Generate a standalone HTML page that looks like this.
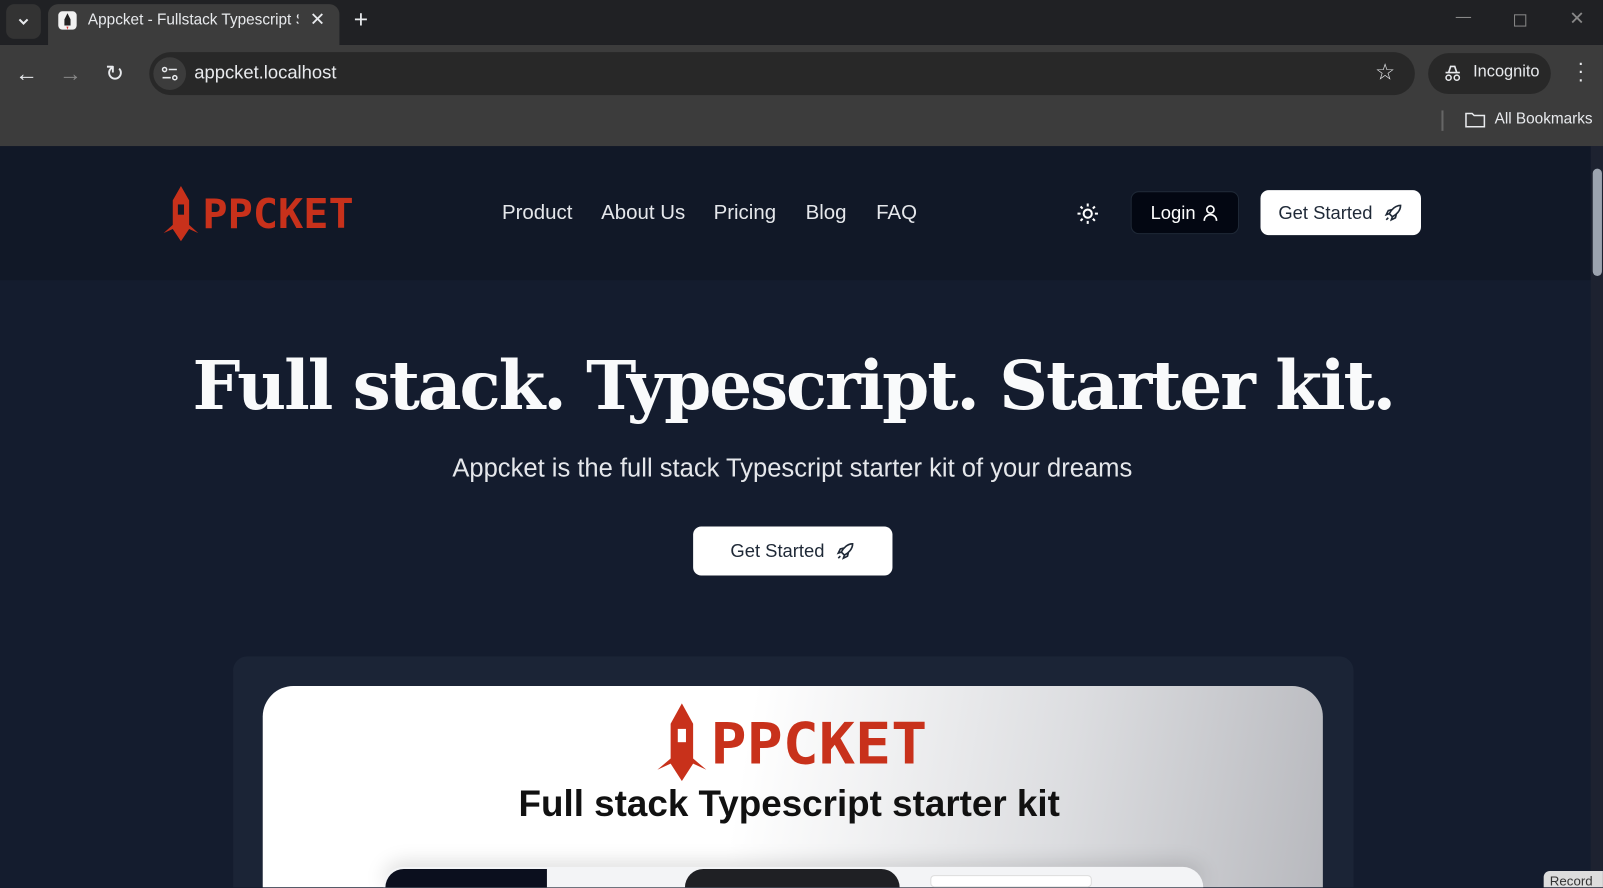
<!DOCTYPE html>
<html><head><meta charset="utf-8"><style>
*{margin:0;padding:0;box-sizing:border-box}
html,body{width:1603px;height:888px;overflow:hidden}
body{background:#141c2e;font-family:"Liberation Sans",sans-serif;position:relative}
#w{position:absolute;left:0;top:0;width:1568px;height:868px;transform:scale(1.0223);transform-origin:0 0;overflow:hidden}
.abs{position:absolute}
.tabbar{left:0;top:0;width:1568px;height:44px;background:#202124}
.toolbar{left:0;top:44px;width:1568px;height:99px;background:#3c3c3c}
.tab{left:47px;top:4px;width:285px;height:40px;background:#3c3c3c;border-radius:10px 10px 0 0}
.url{left:146px;top:51px;width:1238px;height:42px;background:#282828;border-radius:21px}
.t{color:#e8eaed;font-size:15px;white-space:nowrap}
.header{left:0;top:143px;width:1556px;height:131px;background:#111827}
.nav a{color:#e5e7eb;font-size:20px;text-decoration:none;position:absolute;top:197px}
.btn{border-radius:8px;display:flex;align-items:center;justify-content:center;font-size:18px}
.scroll{left:1556px;top:143px;width:12px;height:745px;background:#1d2230}
</style></head><body><div id="w">
<div class="abs tabbar"></div>
<div class="abs" style="left:6px;top:4px;width:34px;height:34px;background:#333;border-radius:8px"></div>
<svg class="abs" style="left:16px;top:14px" width="14" height="14"><path d="M3 5l4 4 4-4" stroke="#e8eaed" stroke-width="2" fill="none"/></svg>
<div class="abs tab"></div>
<div class="abs" style="left:57px;top:11px;width:18px;height:18px;background:#f1f1f1;border-radius:4px"></div>
<svg class="abs" style="left:57px;top:11px" width="18" height="18"><path d="M9 2L6 8v6h6V8z" fill="#222"/><path d="M8 15l1 3 1-3z" fill="#d33"/></svg>
<div class="abs t" style="left:86px;top:11px;width:206px;overflow:hidden">Appcket - Fullstack Typescript S</div>
<div class="abs t" style="left:303px;top:9px;font-size:18px">✕</div>
<div class="abs t" style="left:346px;top:6px;font-size:24px">+</div>
<div class="abs t" style="left:1424px;top:8px;color:#888">—</div>
<div class="abs" style="left:1481px;top:14px;width:12px;height:12px;border:1px solid #888"></div>
<div class="abs t" style="left:1535px;top:8px;color:#888;font-size:18px">✕</div>
<div class="abs toolbar"></div>
<div class="abs t" style="left:15px;top:59px;font-size:22px">←</div>
<div class="abs t" style="left:58px;top:59px;font-size:22px;color:#888">→</div>
<div class="abs t" style="left:103px;top:59px;font-size:22px">↻</div>
<div class="abs url"></div>
<div class="abs" style="left:150px;top:56px;width:32px;height:32px;background:#3c3c3c;border-radius:16px"></div>
<svg class="abs" style="left:157px;top:63px" width="18" height="18"><circle cx="4" cy="5" r="2" stroke="#e8eaed" fill="none" stroke-width="1.5"/><path d="M8 5h8M2 13h8" stroke="#e8eaed" stroke-width="1.5"/><circle cx="14" cy="13" r="2" stroke="#e8eaed" fill="none" stroke-width="1.5"/></svg>
<div class="abs t" style="left:190px;top:61px;font-size:18px">appcket.localhost</div>
<div class="abs t" style="left:1345px;top:58px;font-size:22px">☆</div>
<div class="abs" style="left:1397px;top:52px;width:120px;height:40px;background:#282828;border-radius:20px"></div>
<svg class="abs" style="left:1411px;top:62px" width="20" height="20"><path d="M3 9h14M6 9l2-6h4l2 6" stroke="#e8eaed" stroke-width="1.6" fill="none"/><circle cx="6" cy="14" r="2.5" stroke="#e8eaed" fill="none" stroke-width="1.5"/><circle cx="14" cy="14" r="2.5" stroke="#e8eaed" fill="none" stroke-width="1.5"/></svg>
<div class="abs t" style="left:1441px;top:62px;font-size:16px">Incognito</div>
<div class="abs t" style="left:1543px;top:58px;font-size:20px;line-height:8px;width:4px">·<br>·<br>·</div>
<div class="abs" style="left:1410px;top:108px;width:2px;height:20px;background:#666"></div>
<svg class="abs" style="left:1432px;top:108px" width="22" height="18"><path d="M2 3h6l2 2h10v11H2z" stroke="#e8eaed" stroke-width="1.5" fill="none"/></svg>
<div class="abs t" style="left:1462px;top:108px;font-size:15px">All Bookmarks</div>

<div class="abs header"></div>
<svg class="abs" style="left:160px;top:182px" width="190" height="54"><path d="M17 0L9 14v24L0 46l9-4 8 12 8-12 9 4-9-8V14z" fill="#c8311b"/><rect x="14" y="18" width="6" height="10" fill="#111827"/><text x="38" y="41" font-family="DejaVu Sans Mono,Liberation Mono,monospace" font-weight="bold" font-size="40" fill="#c8311b" textLength="148" lengthAdjust="spacingAndGlyphs">PPCKET</text></svg>
<div class="nav"><a style="left:491px">Product</a><a style="left:588px">About Us</a><a style="left:698px">Pricing</a><a style="left:788px">Blog</a><a style="left:857px">FAQ</a></div>
<svg class="abs" style="left:1052px;top:197px" width="24" height="24"><circle cx="12" cy="12" r="4" stroke="#fff" stroke-width="2" fill="none"/><path d="M12 2v3M12 19v3M2 12h3M19 12h3M5 5l2 2M17 17l2 2M5 19l2-2M17 7l2-2" stroke="#fff" stroke-width="2"/></svg>
<div class="abs btn" style="left:1106px;top:187px;width:106px;height:42px;background:#030712;border:1px solid #1f2937;color:#fff">Login&nbsp;<svg width="18" height="18"><circle cx="9" cy="6" r="3.5" stroke="#fff" stroke-width="1.6" fill="none"/><path d="M3 17c0-4 3-6 6-6s6 2 6 6" stroke="#fff" stroke-width="1.6" fill="none"/></svg></div>
<div class="abs btn" style="left:1233px;top:186px;width:157px;height:44px;background:#fff;color:#1f2937">Get Started&nbsp;&nbsp;<svg width="20" height="20"><path d="M17 3c-5 0-9 4-11 8l3 3c4-2 8-6 8-11zM6 11l-3 1 2-4 4-1M9 14l-1 3 4-2 1-4M5 15l-2 2" stroke="#1f2937" stroke-width="1.6" fill="none"/></svg></div>

<div class="abs" style="left:0;top:338px;width:1552px;text-align:center;color:#f9fafb;font-family:'DejaVu Serif',serif;font-weight:bold;font-size:66px;letter-spacing:-2px;white-space:nowrap">Full stack. Typescript. Starter kit.</div>
<div class="abs" style="left:0;top:444px;width:1550px;text-align:center;color:#e5e7eb;font-size:25px">Appcket is the full stack Typescript starter kit of your dreams</div>
<div class="abs btn" style="left:678px;top:515px;width:195px;height:48px;background:#fff;color:#1f2937">Get Started&nbsp;&nbsp;<svg width="20" height="20"><path d="M17 3c-5 0-9 4-11 8l3 3c4-2 8-6 8-11zM6 11l-3 1 2-4 4-1M9 14l-1 3 4-2 1-4M5 15l-2 2" stroke="#1f2937" stroke-width="1.6" fill="none"/></svg></div>

<div class="abs" style="left:228px;top:642px;width:1096px;height:226px;background:#1b2436;border-radius:14px 14px 0 0"></div>
<div class="abs" style="left:257px;top:671px;width:1037px;height:197px;border-radius:30px 30px 0 0;background:linear-gradient(100deg,#fff 0%,#fff 45%,#dcdde0 75%,#b8b9be 100%)"></div>
<svg class="abs" style="left:643px;top:688px" width="270" height="76"><path d="M24 0L13 20v34L0 65l13-6 11 17 11-17 13 6-13-11V20z" fill="#c8311b"/><rect x="20" y="25" width="8" height="13" fill="#fff"/><text x="52" y="59" font-family="DejaVu Sans Mono,Liberation Mono,monospace" font-weight="bold" font-size="56" fill="#c8311b" textLength="212" lengthAdjust="spacingAndGlyphs">PPCKET</text></svg>
<div class="abs" style="left:257px;top:765px;width:1030px;text-align:center;color:#111;font-size:36px;font-weight:bold">Full stack Typescript starter kit</div>
<div class="abs" style="left:375px;top:848px;width:802px;height:20px;background:#f3f4f6;border-radius:22px 22px 0 0;box-shadow:0 -4px 20px rgba(0,0,0,.15)"></div>
<div class="abs" style="left:377px;top:850px;width:158px;height:18px;background:#0b0f1e;border-radius:20px 0 0 0"></div>
<div class="abs" style="left:670px;top:850px;width:210px;height:18px;background:#1f2024;border-radius:20px 20px 0 0"></div>
<div class="abs" style="left:910px;top:856px;width:158px;height:12px;background:#fff;border:1px solid #ddd;border-radius:4px"></div>
<div class="abs" style="left:1556px;top:143px;width:12px;height:725px;background:#1d2230"></div>
<div class="abs" style="left:1558px;top:165px;width:9px;height:105px;background:#9ca3af;border-radius:5px"></div>
<div class="abs" style="left:1510px;top:852px;width:58px;height:16px;background:#ddd;border-radius:6px 0 0 0;font-size:13px;color:#333;padding:2px 6px;overflow:hidden">Record</div>
</div></body></html>
